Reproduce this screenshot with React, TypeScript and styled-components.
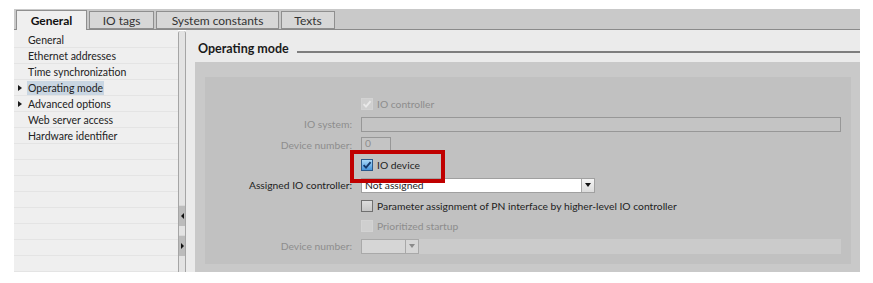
import styled, { createGlobalStyle } from "styled-components";

const GlobalStyle = createGlobalStyle`
  body {
    margin: 0;
    background: #ffffff;
    font-family: Lato, "Liberation Sans", sans-serif;
    color: #1e1e1e;
  }
`;

const navItems = [
  { label: "General" },
  { label: "Ethernet addresses" },
  { label: "Time synchronization" },
  { label: "Operating mode", arrow: true, selected: true },
  { label: "Advanced options", arrow: true },
  { label: "Web server access" },
  { label: "Hardware identifier" },
];

const tabs = [
  { label: "General", width: 71, active: true },
  { label: "IO tags", width: 65 },
  { label: "System constants", width: 123 },
  { label: "Texts", width: 54 },
];

function CheckMark({ color }: { color: string }) {
  return (
    <svg width="10" height="10" viewBox="0 0 10 10">
      <path d="M1.6 5.2 L4 7.6 L8.6 2.2" fill="none" stroke={color} strokeWidth="1.9" />
    </svg>
  );
}

function Checkbox({ checked, disabled }: { checked?: boolean; disabled?: boolean }) {
  return (
    <Box $checked={checked} $disabled={disabled}>
      {checked && <CheckMark color={disabled ? "#e9e9e9" : "#15386a"} />}
    </Box>
  );
}

function App() {
  return (
    <>
      <GlobalStyle />
      <Window>
        <TabBar>
          {tabs.map((t) => (
            <Tab key={t.label} $active={t.active} $width={t.width}>
              {t.label}
            </Tab>
          ))}
        </TabBar>
        <Body>
          <Nav>
            {navItems.map((item) => (
              <NavRow key={item.label}>
                <ArrowSlot>{item.arrow && <Arrow />}</ArrowSlot>
                <NavText $selected={item.selected}>{item.label}</NavText>
              </NavRow>
            ))}
            {Array.from({ length: 8 }).map((_, i) => (
              <NavRow key={i} />
            ))}
          </Nav>
          <Splitter>
            <SplitButton>
              <SplitArrow $dir="left" />
            </SplitButton>
            <SplitButton>
              <SplitArrow $dir="right" />
            </SplitButton>
          </Splitter>
          <Content>
            <Header>
              <Title>Operating mode</Title>
              <Rule />
            </Header>
            <OuterBox>
              <Form>
                <span />
                <CheckRow>
                  <Checkbox checked disabled />
                  <CheckLabel $disabled>IO controller</CheckLabel>
                </CheckRow>

                <Label $disabled>IO system:</Label>
                <TextField />

                <Label $disabled>Device number:</Label>
                <SmallField>0</SmallField>

                <span />
                <CheckRow>
                  <Checkbox checked />
                  <CheckLabel>IO device</CheckLabel>
                  <Highlight />
                </CheckRow>

                <Label>Assigned IO controller:</Label>
                <Select>
                  <SelectValue>Not assigned</SelectValue>
                  <DropButton>
                    <DropArrow />
                  </DropButton>
                </Select>

                <span />
                <CheckRow>
                  <Checkbox />
                  <CheckLabel>Parameter assignment of PN interface by higher-level IO controller</CheckLabel>
                </CheckRow>

                <span />
                <CheckRow>
                  <Checkbox disabled />
                  <CheckLabel $disabled>Prioritized startup</CheckLabel>
                </CheckRow>

                <Label $disabled>Device number:</Label>
                <ComboStrip>
                  <Combo>
                    <DropButton $disabled>
                      <DropArrow $disabled />
                    </DropButton>
                  </Combo>
                </ComboStrip>
              </Form>
            </OuterBox>
          </Content>
        </Body>
      </Window>
    </>
  );
}

const Window = styled.div`
  margin: 9px 0 0 14px;
  width: 846px;
  height: 263px;
  display: flex;
  flex-direction: column;
`;

const TabBar = styled.div`
  height: 21px;
  box-sizing: border-box;
  background: #c9c9c9;
  border-bottom: 1px solid #8a8a8a;
  display: flex;
  align-items: flex-end;
  gap: 2px;
  padding-left: 2px;
`;

const Tab = styled.div<{ $active?: boolean; $width: number }>`
  width: ${(p) => p.$width}px;
  height: ${(p) => (p.$active ? 20 : 18)}px;
  margin-bottom: ${(p) => (p.$active ? -1 : 0)}px;
  box-sizing: border-box;
  display: flex;
  align-items: center;
  justify-content: center;
  border: 1px solid #8f8f8f;
  border-bottom: ${(p) => (p.$active ? "none" : "1px solid #8f8f8f")};
  background: ${(p) => (p.$active ? "#efefef" : "#d7d7d7")};
  font-size: 12px;
  font-weight: ${(p) => (p.$active ? 700 : 400)};
  color: ${(p) => (p.$active ? "#111" : "#333")};
`;

const Body = styled.div`
  flex: 1;
  display: flex;
  min-height: 0;
`;

const Nav = styled.div`
  width: 164px;
  background: #efefef;
  padding-top: 2px;
  overflow: hidden;
`;

const NavRow = styled.div`
  height: 16px;
  box-sizing: border-box;
  border-bottom: 1px solid #e4e4e4;
  display: flex;
  align-items: center;
  padding-left: 4px;
  font-size: 10.5px;
  color: #222;
`;

const ArrowSlot = styled.span`
  width: 9px;
  display: flex;
  align-items: center;
`;

const Arrow = styled.span`
  width: 0;
  height: 0;
  border-left: 4px solid #1a1a1a;
  border-top: 3.5px solid transparent;
  border-bottom: 3.5px solid transparent;
`;

const NavText = styled.span<{ $selected?: boolean }>`
  padding: 1px 1px;
  background: ${(p) => (p.$selected ? "#c9d6e2" : "transparent")};
`;

const Splitter = styled.div`
  width: 8px;
  box-sizing: border-box;
  margin-top: 1px;
  background: #e3e3e3;
  border-left: 1px solid #a5a5a5;
  border-right: 1px solid #a5a5a5;
  border-radius: 2px 2px 0 0;
  display: flex;
  flex-direction: column;
  gap: 9px;
  padding-top: 174px;
`;

const SplitButton = styled.div`
  height: 20px;
  background: #bcbcbc;
  display: flex;
  align-items: center;
  justify-content: center;
  border-top: 1px solid #d8d8d8;
`;

const SplitArrow = styled.span<{ $dir: "left" | "right" }>`
  width: 0;
  height: 0;
  border-top: 3px solid transparent;
  border-bottom: 3px solid transparent;
  ${(p) =>
    p.$dir === "left" ? "border-right: 3px solid #111;" : "border-left: 3px solid #111;"}
`;

const Content = styled.div`
  flex: 1;
  background: #ebebeb;
  display: flex;
  flex-direction: column;
`;

const Header = styled.div`
  height: 23px;
  box-sizing: border-box;
  display: flex;
  align-items: flex-end;
  padding: 0 0 0 12px;
`;

const Title = styled.span`
  font-size: 12.5px;
  font-weight: 700;
  line-height: 9px;
  color: #1a1a1a;
`;

const Rule = styled.span`
  flex: 1;
  height: 2px;
  background: #7e7e7e;
  margin: 0 0 0 8px;
`;

const OuterBox = styled.div`
  flex: 1;
  margin: 9px 0 0 9px;
  background: #c9c9c9;
  padding: 15px 9px 8px 10px;
  display: flex;
`;

const Form = styled.div`
  flex: 1;
  background: #c1c1c1;
  padding: 17px 10px 0 0;
  display: grid;
  grid-template-columns: 147px 480px;
  grid-auto-rows: 20.3px;
  column-gap: 9px;
  align-items: center;
  align-content: start;
  font-size: 10.3px;
`;

const Label = styled.span<{ $disabled?: boolean }>`
  justify-self: end;
  color: ${(p) => (p.$disabled ? "#8d8d8d" : "#1e1e1e")};
  white-space: nowrap;
`;

const CheckRow = styled.div`
  position: relative;
  display: flex;
  align-items: center;
  gap: 4px;
`;

const Box = styled.span<{ $checked?: boolean; $disabled?: boolean }>`
  width: 12px;
  height: 12px;
  box-sizing: border-box;
  display: flex;
  align-items: center;
  justify-content: center;
  border: 1px solid
    ${(p) => (p.$disabled ? "#d3d3d3" : p.$checked ? "#2a5a8c" : "#707070")};
  background: ${(p) =>
    p.$disabled
      ? "#cfcfcf"
      : p.$checked
      ? "linear-gradient(#a9d8f8, #4795dc)"
      : "linear-gradient(#dddddd, #c6c6c6)"};
`;

const CheckLabel = styled.span<{ $disabled?: boolean }>`
  color: ${(p) => (p.$disabled ? "#8d8d8d" : "#1e1e1e")};
  white-space: nowrap;
`;

const Highlight = styled.span`
  position: absolute;
  left: -11px;
  top: -9px;
  width: 95px;
  height: 33px;
  box-sizing: border-box;
  border: 4px solid #c00000;
`;

const TextField = styled.div`
  height: 15px;
  box-sizing: border-box;
  border: 1px solid #979797;
  background: #c4c4c4;
`;

const SmallField = styled.div`
  width: 30px;
  height: 15px;
  box-sizing: border-box;
  border: 1px solid #979797;
  background: #c4c4c4;
  color: #8d8d8d;
  padding-left: 3px;
  line-height: 11px;
`;

const Select = styled.div`
  width: 234px;
  height: 15px;
  box-sizing: border-box;
  border: 1px solid #a0a0a0;
  background: #ffffff;
  display: flex;
  align-items: center;
`;

const SelectValue = styled.span`
  flex: 1;
  padding-left: 3px;
  color: #1e1e1e;
`;

const DropButton = styled.span<{ $disabled?: boolean }>`
  width: 13px;
  align-self: stretch;
  box-sizing: border-box;
  border-left: 1px solid #a8a8a8;
  background: ${(p) => (p.$disabled ? "#d6d6d6" : "linear-gradient(#f4f4f4, #dcdcdc)")};
  display: flex;
  align-items: center;
  justify-content: center;
`;

const DropArrow = styled.span<{ $disabled?: boolean }>`
  width: 0;
  height: 0;
  border-left: 3.5px solid transparent;
  border-right: 3.5px solid transparent;
  border-top: 4px solid ${(p) => (p.$disabled ? "#8a8a8a" : "#111")};
`;

const ComboStrip = styled.div`
  height: 15px;
  background: #cbcbcb;
  display: flex;
`;

const Combo = styled.div`
  width: 58px;
  box-sizing: border-box;
  border: 1px solid #a9a9a9;
  background: #d6d6d6;
  display: flex;
  justify-content: flex-end;
`;

export default App;
